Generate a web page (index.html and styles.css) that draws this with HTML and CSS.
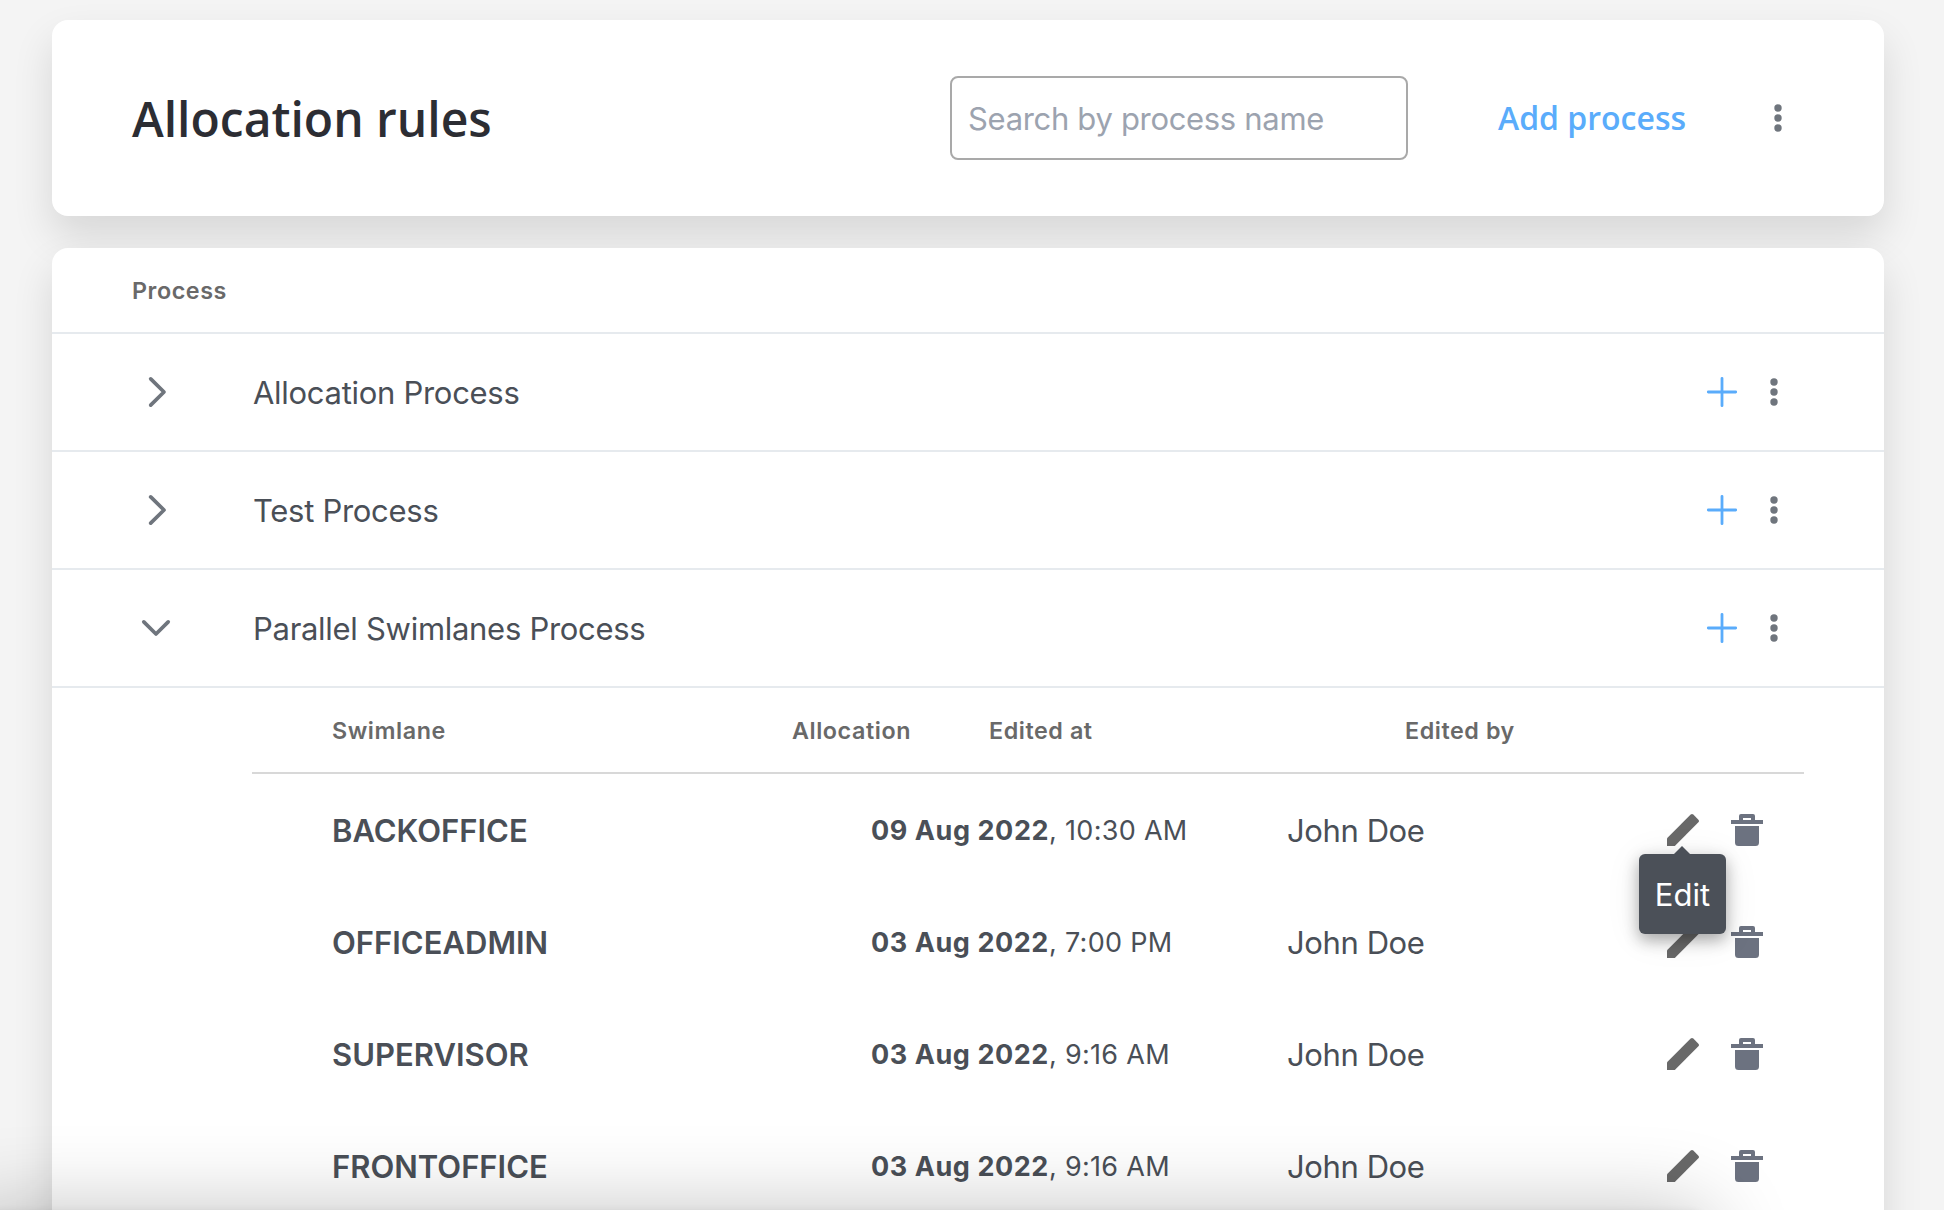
FILE: index.html
```html
<!DOCTYPE html>
<html lang="en">
<head>
<meta charset="utf-8">
<title>Allocation rules</title>
<link rel="stylesheet" href="styles.css">
</head>
<body>
<svg class="sprite" aria-hidden="true">
  <symbol id="dots" viewBox="0 0 8 28"><circle cx="4" cy="4" r="3.7"/><circle cx="4" cy="14" r="3.7"/><circle cx="4" cy="24" r="3.7"/></symbol>
  <symbol id="plus" viewBox="0 0 32 32"><path d="M16 2.3v27.4M2.3 16h27.4" fill="none" stroke="currentColor" stroke-width="2.8" stroke-linecap="round"/></symbol>
  <symbol id="chevron-right" viewBox="0 0 32 32"><path d="M10.7 2.9L24 16L10.7 29.1" fill="none" stroke="currentColor" stroke-width="3.7" stroke-linecap="round" stroke-linejoin="round"/></symbol>
  <symbol id="chevron-down" viewBox="0 0 32 32"><path d="M3.8 9.9L16 22L28.2 9.9" fill="none" stroke="currentColor" stroke-width="3.7" stroke-linecap="round" stroke-linejoin="round"/></symbol>
  <symbol id="pencil" viewBox="0 0 32 32"><path d="M0 24.2L23.7.6Q25 -.6 26.3.6L31.4 5.7Q32.6 7 31.4 8.3L7.8 32H0Z"/></symbol>
  <symbol id="trash" viewBox="0 0 32 32"><path d="M8 6V2Q8 0 10 0H22Q24 0 24 2V6H32V10H0V6ZM12 4V6H20V4ZM4 12H28V28.5Q28 32 24.5 32H7.5Q4 32 4 28.5Z" fill-rule="evenodd"/></symbol>
</svg>
<main class="page">
  <header class="card toolbar">
    <h1 class="title">Allocation rules</h1>
    <input class="search" type="text" placeholder="Search by process name" aria-label="Search">
    <button class="add">Add process</button>
    <svg class="dots"><use href="#dots"/></svg>
  </header>
  <section class="card processes">
    <div class="heading process-heading">Process</div>
    <div class="process">
      <svg class="icon chevron"><use href="#chevron-right"/></svg>
      <span class="process-name">Allocation Process</span>
      <svg class="icon plus"><use href="#plus"/></svg><svg class="dots"><use href="#dots"/></svg>
    </div>
    <div class="process">
      <svg class="icon chevron"><use href="#chevron-right"/></svg>
      <span class="process-name">Test Process</span>
      <svg class="icon plus"><use href="#plus"/></svg><svg class="dots"><use href="#dots"/></svg>
    </div>
    <div class="process">
      <svg class="icon chevron"><use href="#chevron-down"/></svg>
      <span class="process-name">Parallel Swimlanes Process</span>
      <svg class="icon plus"><use href="#plus"/></svg><svg class="dots"><use href="#dots"/></svg>
    </div>
    <div class="lanes">
      <div class="heading lane-heading">
        <span>Swimlane</span><span>Allocation</span><span>Edited at</span><span>Edited by</span>
      </div>
      <div class="lane">
        <span class="lane-name">BACKOFFICE</span>
        <span class="when"><b class="date">09 Aug 2022</b>, 10:30 AM</span>
        <span class="who">John Doe</span>
        <span class="edit"><svg class="icon pencil"><use href="#pencil"/></svg><span class="tooltip">Edit</span></span>
        <svg class="icon trash"><use href="#trash"/></svg>
      </div>
      <div class="lane">
        <span class="lane-name">OFFICEADMIN</span>
        <span class="when"><b class="date">03 Aug 2022</b>, 7:00 PM</span>
        <span class="who">John Doe</span>
        <span class="edit"><svg class="icon pencil"><use href="#pencil"/></svg></span>
        <svg class="icon trash"><use href="#trash"/></svg>
      </div>
      <div class="lane">
        <span class="lane-name">SUPERVISOR</span>
        <span class="when"><b class="date">03 Aug 2022</b>, 9:16 AM</span>
        <span class="who">John Doe</span>
        <span class="edit"><svg class="icon pencil"><use href="#pencil"/></svg></span>
        <svg class="icon trash"><use href="#trash"/></svg>
      </div>
      <div class="lane">
        <span class="lane-name">FRONTOFFICE</span>
        <span class="when"><b class="date">03 Aug 2022</b>, 9:16 AM</span>
        <span class="who">John Doe</span>
        <span class="edit"><svg class="icon pencil"><use href="#pencil"/></svg></span>
        <svg class="icon trash"><use href="#trash"/></svg>
      </div>
    </div>
  </section>
  <div class="bottom-shade"></div>
</main>
</body>
</html>
```
FILE: styles.css
```css
* {
  box-sizing: border-box;
}

body {
  margin: 0;
  background: #f4f4f4;
  color: #4a4f57;
  font: 400 31px/40px Inter, "Liberation Sans", sans-serif;
}

.sprite {
  display: none;
}

.page {
  position: relative;
  display: flex;
  flex-direction: column;
  gap: 32px;
  height: 1210px;
  padding: 20px 60px 0 52px;
  overflow: hidden;
}

.card {
  flex: none;
  background: #fff;
  border-radius: 16px;
  box-shadow: 0 20px 40px rgba(0, 0, 0, 0.12);
}

.toolbar {
  display: flex;
  align-items: center;
  height: 196px;
  padding: 0 102px 0 80px;
}

.title {
  margin: 0;
  padding-top: 2px;
  flex: 1;
  color: #2c2d33;
  font: 600 48px/64px "Open Sans", sans-serif;
}

.search {
  width: 458px;
  height: 84px;
  margin-right: 90px;
  padding: 0 16px;
  border: 2px solid #a9a9a9;
  border-radius: 8px;
  background: #fff;
  color: inherit;
  font: inherit;
  letter-spacing: -0.32px;
}

.search::placeholder {
  color: #9ca3af;
  opacity: 1;
}

.add {
  width: 190px;
  margin-right: 86px;
  padding: 0;
  border: 0;
  background: none;
  color: #5aacfb;
  font: 600 32px/44px "Open Sans", sans-serif;
  text-align: left;
  white-space: nowrap;
}

.dots {
  width: 8px;
  height: 28px;
  fill: #6f757d;
}

.icon {
  display: block;
  width: 32px;
  height: 32px;
  flex: none;
}

.heading {
  color: #696969;
  font-size: 23.3px;
  font-weight: 600;
  letter-spacing: 0.57px;
  line-height: 86px;
}

.process-heading {
  height: 86px;
  padding-left: 80px;
  border-bottom: 2px solid #e6eaee;
}

.process {
  display: flex;
  align-items: center;
  height: 118px;
  padding: 0 106px 0 88px;
  border-bottom: 2px solid #e6eaee;
}

.chevron {
  margin-right: 81px;
  color: #6f757d;
}

.process-name {
  flex: 1;
  padding-top: 2px;
  letter-spacing: -0.29px;
}

.plus {
  margin-right: 32px;
  color: #5aacfb;
}

.lanes {
  margin: 0 80px 0 200px;
  padding-bottom: 80px;
}

.lane-heading {
  display: grid;
  grid-template-columns: 460px 197px 416px auto;
  height: 86px;
  padding-left: 80px;
  border-bottom: 2px solid #d8d8d8;
}

.lane {
  display: grid;
  grid-template-columns: 539px 416px 380px 64px 32px;
  align-items: center;
  height: 112px;
  padding-left: 80px;
}

.lane-name {
  padding-top: 2px;
  font-weight: 600;
  letter-spacing: 0;
}

.when {
  padding-top: 2px;
  font-size: 27px;
  letter-spacing: 0.3px;
}

.date {
  font-weight: 700;
  letter-spacing: 0.57px;
}

.who {
  padding-top: 2px;
  letter-spacing: -0.4px;
}

.edit {
  position: relative;
}

.pencil {
  fill: #696969;
}

.trash {
  fill: #6c7280;
}

.tooltip {
  position: absolute;
  z-index: 1;
  top: 40px;
  left: -28px;
  width: 87px;
  height: 80px;
  border-radius: 6px;
  background: #4b5058;
  box-shadow: 0 6px 16px rgba(0, 0, 0, 0.32), 0 4px 36px rgba(0, 0, 0, 0.08);
  color: #fff;
  line-height: 82px;
  text-align: center;
}

.tooltip::before {
  content: "";
  position: absolute;
  top: -8px;
  left: 35px;
  border: solid transparent;
  border-width: 0 8px 8px;
  border-bottom-color: #4b5058;
}

.bottom-shade {
  position: absolute;
  top: 1210px;
  left: -40px;
  width: 1750px;
  height: 200px;
  border-radius: 20px;
  box-shadow: 0 0 84px rgba(0, 0, 0, 0.24), 0 0 6px rgba(0, 0, 0, 0.06);
}
```
